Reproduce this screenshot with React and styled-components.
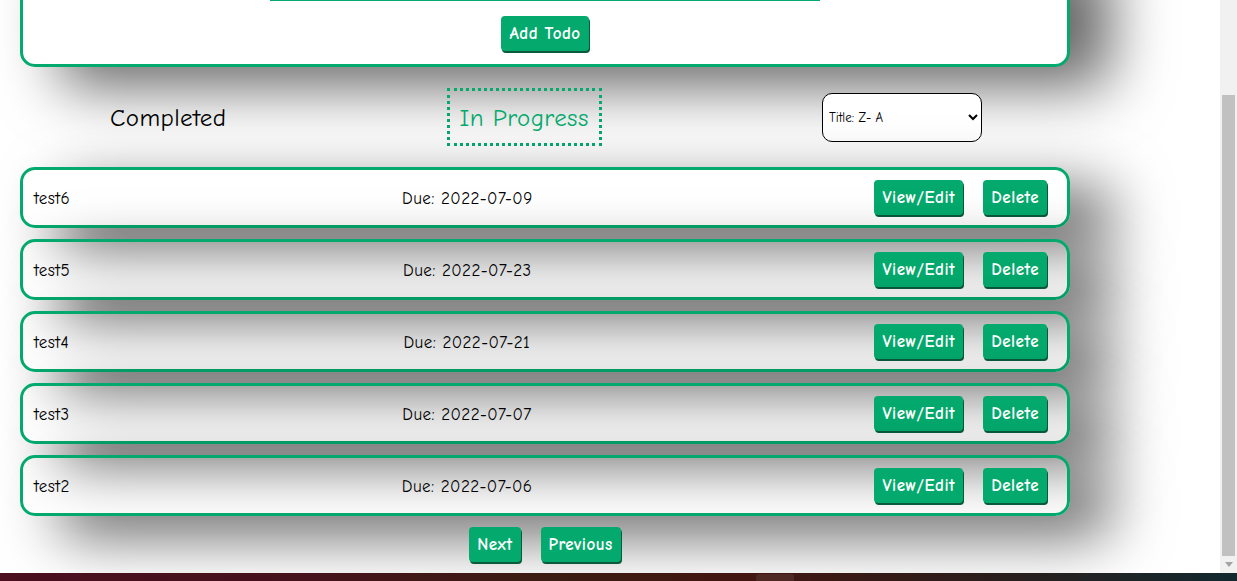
import React from "react";
import styled, { createGlobalStyle } from "styled-components";

const FONT = `"Comic Sans MS", "Comic Neue", "Open Sans", sans-serif`;
const GREEN = "#04AA6D";
const SHADOW = "40px 20px 60px rgba(0, 0, 0, 0.6)";

const Global = createGlobalStyle`
  html, body { margin: 0; padding: 0; background: #fff; overflow: hidden; }
  body { font-family: ${FONT}; color: #000; }
  * { box-sizing: border-box; }
`;

const Screen = styled.div`
  width: 1237px;
  height: 581px;
  display: grid;
  grid-template-columns: 1fr 17px;
  grid-template-rows: 573px 8px;
`;

const Main = styled.main`
  display: flex;
  flex-direction: column;
  justify-content: flex-end;
  overflow: hidden;
  padding-bottom: 11px;
  background: #fff;
`;

const FormCard = styled.form`
  width: 1050px;
  margin-left: 20px;
  background: #fff;
  border: 3px solid ${GREEN};
  border-radius: 15px;
  box-shadow: ${SHADOW};
  padding: 20px 0 13px;
  display: flex;
  flex-direction: column;
  align-items: center;
  gap: 15px;
  flex-shrink: 0;
`;

const TextInput = styled.input`
  width: 550px;
  height: 42px;
  border: none;
  border-bottom: 2px solid ${GREEN};
  font-family: ${FONT};
  font-size: 16px;
  outline: none;
  background: transparent;
`;

const Button = styled.button`
  height: 35px;
  padding: 0 8px;
  margin: ${(p) => p.$margin || "0"};
  border: none;
  border-radius: 4px;
  background: ${GREEN};
  color: #fff;
  font-family: ${FONT};
  font-size: 17px;
  letter-spacing: 0.5px;
  font-weight: bold;
  box-shadow: 1px 2px 0 #0a5a3b;
  cursor: pointer;
  flex-shrink: 0;
`;

const Tabs = styled.div`
  width: 1092px;
  height: 58px;
  margin: 21px 0;
  display: flex;
  justify-content: space-around;
  align-items: center;
  flex-shrink: 0;
`;

const Tab = styled.div`
  height: 58px;
  padding: 1px 10px 0;
  display: flex;
  align-items: center;
  font-size: 25px;
  letter-spacing: 0.4px;
  color: ${(p) => (p.$active ? GREEN : "#000")};
  border: 3px ${(p) => (p.$active ? "dotted" : "solid")}
    ${(p) => (p.$active ? GREEN : "transparent")};
  margin: ${(p) => (p.$active ? "0" : "0 -13px")};
  cursor: pointer;
`;

const SortSelect = styled.select`
  width: 160px;
  height: 49px;
  border: 1px solid #000;
  border-radius: 10px;
  background: #fff;
  font-family: ${FONT};
  font-size: 13px;
  color: #000;
  padding: 0 2px;
`;

const List = styled.ul`
  list-style: none;
  margin: 0;
  padding: 0;
  display: flex;
  flex-direction: column;
  gap: 11px;
  flex-shrink: 0;
`;

const Row = styled.li`
  width: 1050px;
  height: 61px;
  margin-left: 20px;
  border: 3px solid ${GREEN};
  border-radius: 15px;
  box-shadow: ${SHADOW};
  padding: 1px 10px 0 11px;
  display: flex;
  justify-content: space-between;
  align-items: center;
  font-size: 17px;
  letter-spacing: 0.45px;
`;

const Title = styled.span``;
const Due = styled.span``;
const Actions = styled.div`
  display: flex;
  align-items: center;
  margin-top: -1px;
`;

const Pager = styled.div`
  width: 1050px;
  margin: 11px 0 0 20px;
  display: flex;
  justify-content: center;
  flex-shrink: 0;
`;

const Track = styled.div`
  background: #f1f1f1;
  padding: 95px 2px 0;
  display: flex;
  flex-direction: column;
`;

const Thumb = styled.div`
  height: 461px;
  background: #c1c1c1;
`;

const ArrowArea = styled.div`
  flex: 1;
  display: flex;
  align-items: center;
  justify-content: center;
`;

const Taskbar = styled.div`
  grid-column: 1 / span 2;
  background: linear-gradient(
    90deg,
    #4b0f1f 0%,
    #45121c 25%,
    #3b1d12 45%,
    #431510 60%,
    #2a1e1c 80%,
    #12292f 100%
  );
  display: flex;
  padding-left: 756px;
`;

const TaskItem = styled.div`
  width: 38px;
  height: 8px;
  margin-top: 1px;
  border-radius: 3px 3px 0 0;
  background: rgba(255, 255, 255, 0.08);
`;

const todos = [
  { title: "test6", due: "2022-07-09" },
  { title: "test5", due: "2022-07-23" },
  { title: "test4", due: "2022-07-21" },
  { title: "test3", due: "2022-07-07" },
  { title: "test2", due: "2022-07-06" },
];

export default function App() {
  return (
    <>
      <Global />
      <Screen>
        <Main>
          <FormCard onSubmit={(e) => e.preventDefault()}>
            <TextInput type="text" aria-label="Todo" />
            <Button type="submit">Add Todo</Button>
          </FormCard>

          <Tabs>
            <Tab>Completed</Tab>
            <Tab $active>In Progress</Tab>
            <SortSelect defaultValue="za">
              <option value="az">Title: A- Z</option>
              <option value="za">Title: Z- A</option>
              <option value="due">Due date</option>
            </SortSelect>
          </Tabs>

          <List>
            {todos.map((t) => (
              <Row key={t.title}>
                <Title>{t.title}</Title>
                <Due>Due: {t.due}</Due>
                <Actions>
                  <Button $margin="0 10px">View/Edit</Button>
                  <Button $margin="0 10px">Delete</Button>
                </Actions>
              </Row>
            ))}
          </List>

          <Pager>
            <Button $margin="0 10px">Next</Button>
            <Button $margin="0 10px">Previous</Button>
          </Pager>
        </Main>

        <Track>
          <Thumb />
          <ArrowArea>
            <svg width="8" height="5" viewBox="0 0 8 5">
              <path d="M0 0 H8 L4 5 Z" fill="#a3a3a3" />
            </svg>
          </ArrowArea>
        </Track>

        <Taskbar>
          <TaskItem />
        </Taskbar>
      </Screen>
    </>
  );
}
